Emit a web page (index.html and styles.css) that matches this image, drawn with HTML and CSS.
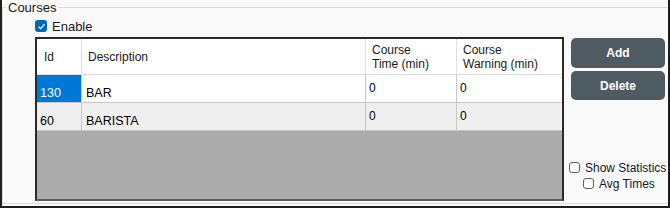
FILE: index.html
```html
<!DOCTYPE html>
<html>
<head>
    <meta charset="UTF-8">
    <title>Courses</title>
    <link rel="stylesheet" href="styles.css">
</head>
<body>
    <div class="frame">
        <fieldset class="group">
            <legend>Courses</legend>

            <label class="enable">
                <span class="check on">
                    <svg width="9" height="9" viewBox="0 0 9 9"><path d="M1.5 4.6 L3.6 6.6 L7.6 2.2" fill="none" stroke="#fff" stroke-width="1.3"/></svg>
                </span>
                Enable
            </label>

            <div class="main">
                <div class="grid">
                    <div class="row head">
                        <div class="cell c-id">Id</div>
                        <div class="cell c-desc">Description</div>
                        <div class="cell c-time">Course<br>Time (min)</div>
                        <div class="cell c-warn">Course<br>Warning (min)</div>
                    </div>
                    <div class="row data">
                        <div class="cell c-id selected">130</div>
                        <div class="cell c-desc">BAR</div>
                        <div class="cell c-time">0</div>
                        <div class="cell c-warn">0</div>
                    </div>
                    <div class="row data alt">
                        <div class="cell c-id">60</div>
                        <div class="cell c-desc">BARISTA</div>
                        <div class="cell c-time">0</div>
                        <div class="cell c-warn">0</div>
                    </div>
                    <div class="empty"></div>
                </div>

                <div class="side">
                    <button class="button">Add</button>
                    <button class="button">Delete</button>
                    <div class="options">
                        <label class="opt"><span class="check"></span>Show Statistics</label>
                        <label class="opt sub"><span class="check"></span>Avg Times</label>
                    </div>
                </div>
            </div>
        </fieldset>
    </div>
</body>
</html>
```

FILE: styles.css
```css
body {
    margin: 0;
    padding: 0;
    background-color: #fafafa;
    font-family: "Liberation Sans", Arial, sans-serif;
    color: #000;
}
.frame {
    width: 670px;
    height: 208px;
    box-sizing: border-box;
    border-left: 2px solid #1e1e1e;
    border-right: 2px solid #1e1e1e;
    border-bottom: 2px solid #1e1e1e;
    background-color: #f9f9f9;
}
.group {
    margin: 0;
    padding: 0;
    height: 204px;
    box-sizing: border-box;
    border: 1px solid #dcdcdc;
    border-right: none;
    min-width: 0;
}
.group legend {
    font-size: 13px;
    line-height: 15px;
    padding: 0 2px;
    margin-left: 3px;
    color: #1a1a1a;
}
.enable {
    display: flex;
    align-items: center;
    gap: 5px;
    margin: 4px 0 0 32px;
    height: 14px;
    font-size: 13px;
    color: #1a1a1a;
}
.check {
    display: inline-flex;
    align-items: center;
    justify-content: center;
    flex: none;
    width: 11px;
    height: 11px;
    box-sizing: border-box;
    border: 1px solid #5f5f5f;
    border-radius: 3px;
    background-color: #fff;
}
.check.on {
    width: 12px;
    height: 12px;
    border: none;
    background-color: #0067c0;
}
.main {
    display: flex;
    margin: 4px 0 0 32px;
}
.grid {
    width: 529px;
    height: 164px;
    flex: none;
    box-sizing: border-box;
    border: 2px solid #2a2a2a;
    border-bottom-color: #5a5a5a;
    display: flex;
    flex-direction: column;
    background-color: #ababab;
}
.row {
    display: grid;
    grid-template-columns: 45px 284px 91px 1fr;
}
.cell {
    box-sizing: border-box;
    border-right: 1px solid #e0e0e0;
    padding: 0 6px;
    font-size: 12px;
}
.cell.c-warn {
    border-right: none;
}
.head {
    height: 35px;
    background-color: #fff;
    border-bottom: 1px solid #dcdcdc;
}
.head .cell {
    display: flex;
    align-items: center;
    line-height: 14px;
    color: #1a1a1a;
}
.head .c-id {
    padding-left: 7px;
}
.data {
    height: 27px;
    background-color: #fff;
    border-bottom: 1px solid #c8c8c8;
}
.data.alt {
    background-color: #efefef;
}
.data .cell {
    border-right-color: #c8c8c8;
    line-height: 14px;
}
.data .c-id,
.data .c-desc {
    padding-top: 11px;
    padding-left: 3px;
    font-size: 12.5px;
}
.data .c-desc {
    padding-left: 4px;
}
.data .c-time,
.data .c-warn {
    padding-top: 6px;
    padding-left: 3px;
}
.selected {
    background-color: #0078d7;
    color: #fff;
}
.empty {
    flex: 1;
}
.side {
    display: flex;
    flex-direction: column;
    margin-left: 2px;
    flex: 1;
    min-width: 0;
}
.button {
    width: 94px;
    height: 30px;
    margin: 1px 0 3px 5px;
    border: none;
    border-radius: 5px;
    background-color: #4f5b63;
    color: #fff;
    font-family: "Liberation Sans", Arial, sans-serif;
    font-weight: bold;
    font-size: 12px;
}
.button + .button {
    height: 29px;
    margin-top: 0;
}
.options {
    margin-top: 58px;
    display: flex;
    flex-direction: column;
    gap: 3px;
}
.opt {
    display: flex;
    align-items: center;
    gap: 5px;
    height: 13px;
    font-size: 12px;
    white-space: nowrap;
    color: #1a1a1a;
    margin-left: 3px;
}
.opt.sub {
    margin-left: 17px;
}
```
